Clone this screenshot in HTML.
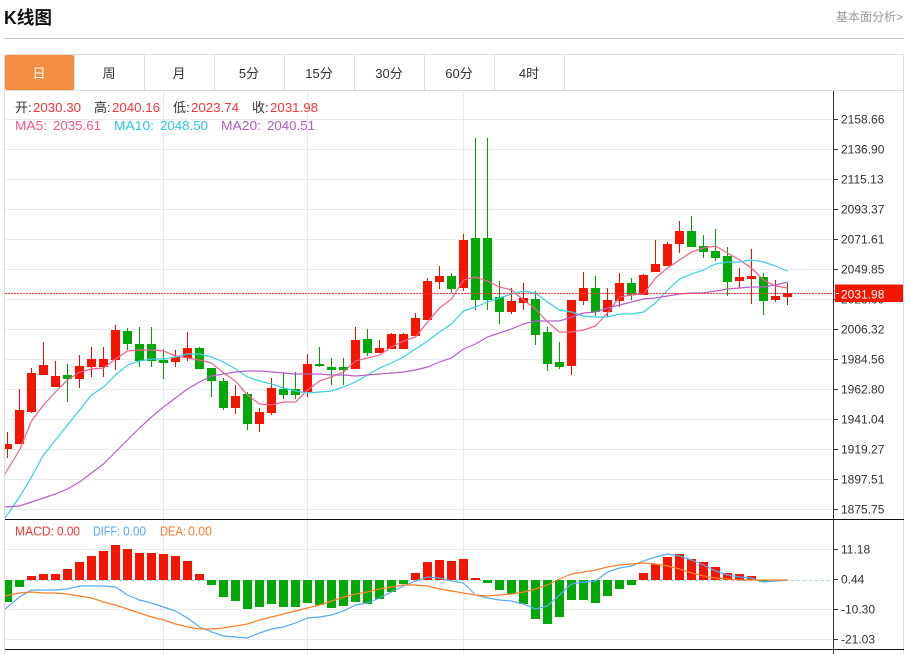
<!DOCTYPE html>
<html lang="zh"><head><meta charset="utf-8"><title>K线图</title>
<style>
html,body{margin:0;padding:0;background:#fff;width:911px;height:654px;overflow:hidden}
svg{display:block}
text{font-family:"Liberation Sans","Noto Sans CJK SC",sans-serif}
</style></head><body>
<svg xmlns="http://www.w3.org/2000/svg" width="911" height="654" viewBox="0 0 911 654">
<defs><clipPath id="c"><rect x="5" y="91" width="828" height="563"/></clipPath></defs>
<text x="4" y="24" font-size="18" font-weight="bold" fill="#111" textLength="48" lengthAdjust="spacingAndGlyphs">K线图</text>
<text x="903" y="21" font-size="12" fill="#999" text-anchor="end">基本面分析&gt;</text>
<rect x="4" y="38" width="900" height="1" fill="#ccc"/>
<!-- frame -->
<path d="M4.5 54V654M903.5 54V654M4 54.5H904M4 90.5H904" stroke="#ddd" fill="none"/>
<rect x="5" y="55" width="69" height="35" rx="2" fill="#f48d3f"/>
<path d="M74.5 55V90M144.5 55V90M214.5 55V90M284.5 55V90M354.5 55V90M424.5 55V90M494.5 55V90M564.5 55V90" stroke="#ddd"/>
<g font-size="13" fill="#333" text-anchor="middle">
<text x="39" y="78" fill="#fff">日</text><text x="109" y="78">周</text><text x="179" y="78">月</text><text x="249" y="78">5分</text><text x="319" y="78">15分</text><text x="389" y="78">30分</text><text x="459" y="78">60分</text><text x="529" y="78">4时</text>
</g>
<!-- grid -->
<path d="M5 119.5H833M5 149.5H833M5 179.5H833M5 209.5H833M5 239.5H833M5 269.5H833M5 299.5H833M5 329.5H833M5 359.5H833M5 389.5H833M5 419.5H833M5 449.5H833M5 479.5H833M5 509.5H833M5 549.5H833M5 609.5H833M5 639.5H833M163.5 91V654M307.5 91V654M463.5 91V654" stroke="#e6ecf0" fill="none"/>
<path d="M5 580.5H833" stroke="#a9d5ea" stroke-dasharray="3 3" fill="none"/>
<g clip-path="url(#c)">
<!-- red wicks -->
<path fill="none" stroke="#f01000" d="M7.5 432V458M19.5 389V444M31.5 368V413M43.5 342V375M55.5 361V387M79.5 355V388M91.5 347V377M103.5 347V377M115.5 325V370M175.5 350V367M187.5 332V361M235.5 385V414M259.5 408V432M271.5 378V415M307.5 354V397M355.5 327V369M379.5 340V353M391.5 333V349M403.5 333V349M415.5 313V336M427.5 278V320M439.5 266V289M463.5 234V291M511.5 288V314M523.5 283V310M571.5 300V375M583.5 272V305M607.5 288V317M619.5 273V307M643.5 274V295M655.5 240V272M667.5 242V266M679.5 221V253M739.5 268V288M751.5 249V304M775.5 280V302M787.5 283V305"/>
<!-- red bodies -->
<path fill="#f51500" d="M3 444h9V449h-9zM15 410h9V444h-9zM27 373h9V412h-9zM39 365h9V375h-9zM51 376h9V387h-9zM75 366h9V379h-9zM87 359h9V367h-9zM99 359h9V367h-9zM111 330h9V360h-9zM171 357h9V362h-9zM183 348h9V358h-9zM231 396h9V408h-9zM255 412h9V424h-9zM267 388h9V413h-9zM303 364h9V392h-9zM351 340h9V369h-9zM375 348h9V353h-9zM387 334h9V349h-9zM399 334h9V349h-9zM411 318h9V336h-9zM423 281h9V320h-9zM435 276h9V282h-9zM459 240h9V288h-9zM507 301h9V312h-9zM519 298h9V303h-9zM567 300h9V366h-9zM579 288h9V301h-9zM603 300h9V312h-9zM615 283h9V301h-9zM639 275h9V295h-9zM651 264h9V272h-9zM663 244h9V266h-9zM675 231h9V244h-9zM735 277h9V281h-9zM747 276h9V279h-9zM771 296h9V300h-9zM783 293h9V297h-9z"/>
<!-- green wicks -->
<path fill="none" stroke="#00a000" d="M67.5 364V402M127.5 328V350M139.5 327V367M151.5 327V367M163.5 349V379M199.5 347V369M211.5 368V397M223.5 378V410M247.5 392V430M283.5 372V399M295.5 372V399M319.5 347V367M331.5 358V385M343.5 358V385M367.5 329V356M451.5 273V293M475.5 138V310M487.5 138V310M499.5 281V324M535.5 291V345M547.5 327V371M559.5 342V369M595.5 276V316M631.5 278V300M691.5 216V247M703.5 235V258M715.5 229V261M727.5 247V296M763.5 273V315"/>
<!-- green bodies -->
<path fill="#00a808" d="M63 375h9V379h-9zM123 331h9V344h-9zM135 344h9V361h-9zM147 344h9V361h-9zM159 360h9V363h-9zM195 348h9V369h-9zM207 368h9V381h-9zM219 381h9V408h-9zM243 394h9V424h-9zM279 389h9V395h-9zM291 389h9V395h-9zM315 364h9V366h-9zM327 367h9V370h-9zM339 367h9V370h-9zM363 339h9V353h-9zM447 276h9V289h-9zM471 238h9V300h-9zM483 238h9V300h-9zM495 297h9V312h-9zM531 299h9V335h-9zM543 332h9V364h-9zM555 362h9V367h-9zM591 288h9V312h-9zM627 283h9V295h-9zM687 231h9V247h-9zM699 246h9V252h-9zM711 251h9V258h-9zM723 256h9V282h-9zM759 277h9V301h-9z"/>
<!-- MA lines -->
<polyline fill="none" stroke="#f2608f" stroke-width="1.2" points="5,474 19.5,450 31.5,421 43.5,405 55.5,392 67.5,380 79.5,372 91.5,369 103.5,368 115.5,359 127.5,351 139.5,350 151.5,350 163.5,351 175.5,356 187.5,358 199.5,360 211.5,363 223.5,373 235.5,381 247.5,395 259.5,404 271.5,405 283.5,402 295.5,402 307.5,390 319.5,381 331.5,377 343.5,372 355.5,361 367.5,358 379.5,355 391.5,347 403.5,341 415.5,337 427.5,322 439.5,308 451.5,299 463.5,280 475.5,277 487.5,281 499.5,287 511.5,290 523.5,300 535.5,309 547.5,322 559.5,332 571.5,332 583.5,330 595.5,326 607.5,313 619.5,297 631.5,295 643.5,294 655.5,278 667.5,268 679.5,260 691.5,252 703.5,248 715.5,246 727.5,253 739.5,260 751.5,268 763.5,280 775.5,286 787.5,288"/>
<polyline fill="none" stroke="#3ecfe3" stroke-width="1.2" points="5,518 19.5,497 31.5,477 43.5,455 55.5,440 67.5,425 79.5,410 91.5,395 103.5,387 115.5,375 127.5,365 139.5,361 151.5,359 163.5,359 175.5,357 187.5,354 199.5,354 211.5,357 223.5,362 235.5,369 247.5,377 259.5,381 271.5,384 283.5,388 295.5,391 307.5,393 319.5,392 331.5,391 343.5,387 355.5,382 367.5,375 379.5,368 391.5,363 403.5,357 415.5,349 427.5,341 439.5,332 451.5,324 463.5,311 475.5,307 487.5,302 499.5,298 511.5,294 523.5,291 535.5,293 547.5,302 559.5,310 571.5,312 583.5,316 595.5,317 607.5,317 619.5,314 631.5,314 643.5,312 655.5,303 667.5,290 679.5,279 691.5,274 703.5,270 715.5,264 727.5,262 739.5,262 751.5,260 763.5,262 775.5,266 787.5,271"/>
<polyline fill="none" stroke="#b860c8" stroke-width="1.2" points="5,507 19.5,506 31.5,502 43.5,498 55.5,494 67.5,489 79.5,482 91.5,473 103.5,464 115.5,452 127.5,440 139.5,428 151.5,417 163.5,407 175.5,398 187.5,389 199.5,382 211.5,376 223.5,374 235.5,372 247.5,371 259.5,371 271.5,372 283.5,373 295.5,374 307.5,374 319.5,374 331.5,375 343.5,375 355.5,376 367.5,375 379.5,374 391.5,373 403.5,372 415.5,370 427.5,367 439.5,362 451.5,358 463.5,349 475.5,344 487.5,337 499.5,333 511.5,329 523.5,324 535.5,321 547.5,321 559.5,321 571.5,317 583.5,313 595.5,312 607.5,308 619.5,305 631.5,302 643.5,299 655.5,298 667.5,296 679.5,294 691.5,293 703.5,293 715.5,291 727.5,289 739.5,288 751.5,287 763.5,287 775.5,285 787.5,282"/>
<!-- MACD bars -->
<path fill="#f51500" d="M27 576h9V580h-9zM39 574h9V580h-9zM51 574h9V580h-9zM63 569h9V580h-9zM75 562h9V580h-9zM87 556h9V580h-9zM99 551h9V580h-9zM111 545h9V580h-9zM123 549h9V580h-9zM135 553h9V580h-9zM147 553h9V580h-9zM159 554h9V580h-9zM171 556h9V580h-9zM183 561h9V580h-9zM195 574h9V580h-9zM411 573h9V580h-9zM423 562h9V580h-9zM435 560h9V580h-9zM447 561h9V580h-9zM459 559h9V580h-9zM471 578h9V580h-9zM639 573h9V580h-9zM651 564h9V580h-9zM663 557h9V580h-9zM675 554h9V580h-9zM687 559h9V580h-9zM699 562h9V580h-9zM711 567h9V580h-9zM723 573h9V580h-9zM735 574h9V580h-9zM747 576h9V580h-9z"/>
<path fill="#00a808" d="M3 580h9V602h-9zM15 580h9V587h-9zM207 580h9V585h-9zM219 580h9V597h-9zM231 580h9V601h-9zM243 580h9V609h-9zM255 580h9V607h-9zM267 580h9V604h-9zM279 580h9V607h-9zM291 580h9V607h-9zM303 580h9V603h-9zM315 580h9V605h-9zM327 580h9V608h-9zM339 580h9V606h-9zM351 580h9V602h-9zM363 580h9V604h-9zM375 580h9V599h-9zM387 580h9V592h-9zM399 580h9V584h-9zM483 580h9V583h-9zM495 580h9V590h-9zM507 580h9V594h-9zM519 580h9V604h-9zM531 580h9V619h-9zM543 580h9V624h-9zM555 580h9V617h-9zM567 580h9V600h-9zM579 580h9V600h-9zM591 580h9V603h-9zM603 580h9V596h-9zM615 580h9V589h-9zM627 580h9V585h-9zM759 580h9V582h-9z"/>
<polyline fill="none" stroke="#5aaaf0" stroke-width="1.2" points="5,609 19.5,597 31.5,590 43.5,590 55.5,590 67.5,589 79.5,586 91.5,586 103.5,586 115.5,587 127.5,595 139.5,600 151.5,603 163.5,607 175.5,611 187.5,618 199.5,627 211.5,632 223.5,636 235.5,637 247.5,638 259.5,633 271.5,629 283.5,627 295.5,623 307.5,618 319.5,617 331.5,615 343.5,611 355.5,605 367.5,603 379.5,598 391.5,592 403.5,586 415.5,581 427.5,577 439.5,578 451.5,581 463.5,583 475.5,595 487.5,598 499.5,600 511.5,601 523.5,604 535.5,609 547.5,606 559.5,595 571.5,584 583.5,582 595.5,581 607.5,572 619.5,568 631.5,566 643.5,561 655.5,557 667.5,554 679.5,556 691.5,560 703.5,565 715.5,571 727.5,575 739.5,577 751.5,578 763.5,582 775.5,581 787.5,580"/>
<polyline fill="none" stroke="#f7812a" stroke-width="1.2" points="5,596 19.5,593 31.5,592 43.5,593 55.5,593 67.5,594 79.5,596 91.5,598 103.5,602 115.5,605 127.5,609 139.5,613 151.5,617 163.5,620 175.5,624 187.5,627 199.5,629 211.5,629 223.5,628 235.5,626 247.5,624 259.5,620 271.5,617 283.5,614 295.5,611 307.5,608 319.5,605 331.5,601 343.5,597 355.5,594 367.5,592 379.5,589 391.5,587 403.5,585 415.5,585 427.5,586 439.5,589 451.5,591 463.5,593 475.5,595 487.5,596 499.5,595 511.5,594 523.5,592 535.5,589 547.5,585 559.5,579 571.5,574 583.5,572 595.5,570 607.5,567 619.5,565 631.5,564 643.5,563 655.5,564 667.5,566 679.5,569 691.5,573 703.5,576 715.5,578 727.5,579 739.5,580 751.5,580 763.5,580 775.5,580 787.5,580"/>
</g>
<!-- current price line -->
<path d="M5 293.5H833" stroke="#f33" stroke-dasharray="2 1" fill="none"/>
<!-- panel separators & axis -->
<rect x="5" y="519" width="899" height="1" fill="#111"/>
<rect x="5" y="649" width="899" height="1" fill="#111"/>
<rect x="833" y="91" width="1" height="563" fill="#333"/>
<path d="M834 119.5h4M834 149.5h4M834 179.5h4M834 209.5h4M834 239.5h4M834 269.5h4M834 299.5h4M834 329.5h4M834 359.5h4M834 389.5h4M834 419.5h4M834 449.5h4M834 479.5h4M834 509.5h4M834 549.5h4M834 579.5h4M834 609.5h4M834 639.5h4" stroke="#333" fill="none"/>
<g font-size="12" fill="#333">
<text x="841" y="123.5">2158.66</text><text x="841" y="153.5">2136.90</text><text x="841" y="183.5">2115.13</text><text x="841" y="213.5">2093.37</text><text x="841" y="243.5">2071.61</text><text x="841" y="273.5">2049.85</text><text x="841" y="303.5">2028.09</text><text x="841" y="333.5">2006.32</text><text x="841" y="363.5">1984.56</text><text x="841" y="393.5">1962.80</text><text x="841" y="423.5">1941.04</text><text x="841" y="453.5">1919.27</text><text x="841" y="483.5">1897.51</text><text x="841" y="513.5">1875.75</text>
<text x="841" y="553.5">11.18</text><text x="841" y="583.5">0.44</text><text x="841" y="613.5">-10.30</text><text x="841" y="643.5">-21.03</text>
</g>
<rect x="835" y="284" width="68" height="1" fill="#f98a80"/>
<rect x="835" y="285" width="68" height="17" fill="#f51500"/>
<path d="M836 293.5h3" stroke="#fff"/>
<text x="841" y="298.5" font-size="12" fill="#fff">2031.98</text>
<!-- legend -->
<g font-size="13">
<g fill="#333"><text x="15" y="112">开:</text><text x="94" y="112">高:</text><text x="173" y="112">低:</text><text x="252" y="112">收:</text></g>
<g fill="#f33"><text x="33" y="112" textLength="48" lengthAdjust="spacingAndGlyphs">2030.30</text><text x="112" y="112" textLength="48" lengthAdjust="spacingAndGlyphs">2040.16</text><text x="191" y="112" textLength="48" lengthAdjust="spacingAndGlyphs">2023.74</text><text x="270" y="112" textLength="48" lengthAdjust="spacingAndGlyphs">2031.98</text></g>
<g fill="#f4578b"><text x="15" y="130" textLength="32" lengthAdjust="spacingAndGlyphs">MA5:</text><text x="53" y="130" textLength="48" lengthAdjust="spacingAndGlyphs">2035.61</text></g>
<g fill="#2cc8de"><text x="114" y="130" textLength="40" lengthAdjust="spacingAndGlyphs">MA10:</text><text x="160" y="130" textLength="48" lengthAdjust="spacingAndGlyphs">2048.50</text></g>
<g fill="#b55cc6"><text x="221" y="130" textLength="40" lengthAdjust="spacingAndGlyphs">MA20:</text><text x="267" y="130" textLength="48" lengthAdjust="spacingAndGlyphs">2040.51</text></g>
<g fill="#f33"><text x="15" y="535.5" textLength="39" lengthAdjust="spacingAndGlyphs">MACD:</text><text x="57" y="535.5" textLength="23" lengthAdjust="spacingAndGlyphs">0.00</text></g>
<g fill="#55a9ee"><text x="93" y="535.5" textLength="27" lengthAdjust="spacingAndGlyphs">DIFF:</text><text x="123" y="535.5" textLength="23" lengthAdjust="spacingAndGlyphs">0.00</text></g>
<g fill="#fb7d2c"><text x="160" y="535.5" textLength="26" lengthAdjust="spacingAndGlyphs">DEA:</text><text x="188" y="535.5" textLength="24" lengthAdjust="spacingAndGlyphs">0.00</text></g>
</g>
</svg>
</body></html>
